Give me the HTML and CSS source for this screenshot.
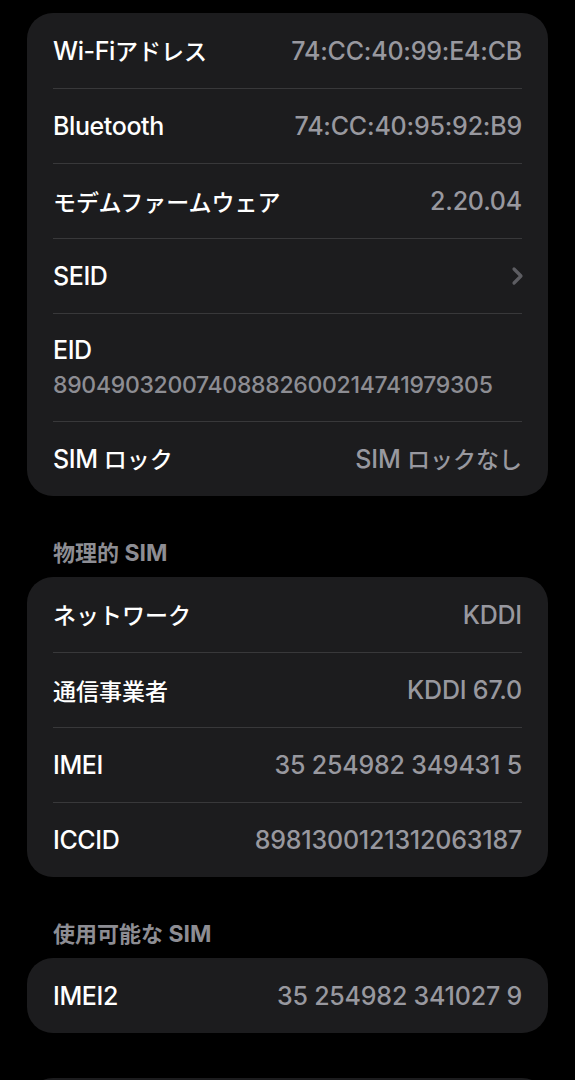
FILE: index.html
```html
<!DOCTYPE html>
<html lang="ja">
<head>
  <meta charset="UTF-8">
  <title>情報</title>
  <link rel="stylesheet" href="styles.css">
</head>
<body>
  <div class="page">
    <div class="card">
      <div class="row">
        <span class="label">Wi-Fi<span class="jp">アドレス</span></span>
        <span class="value">74:CC:40:99:E4:CB</span>
      </div>
      <div class="row">
        <span class="label">Bluetooth</span>
        <span class="value">74:CC:40:95:92:B9</span>
      </div>
      <div class="row">
        <span class="label jp">モデムファームウェア</span>
        <span class="value">2.20.04</span>
      </div>
      <div class="row">
        <span class="label">SEID</span>
        <svg class="chevron" width="13" height="20" viewBox="0 0 13 20">
          <path d="M3 3 L10 10 L3 17" fill="none" stroke="#5d5d62" stroke-width="3.2" stroke-linecap="round" stroke-linejoin="round"/>
        </svg>
      </div>
      <div class="row row-stack">
        <span class="label">EID</span>
        <span class="value sub">89049032007408882600214741979305</span>
      </div>
      <div class="row">
        <span class="label">SIM <span class="jp">ロック</span></span>
        <span class="value">SIM <span class="jp">ロックなし</span></span>
      </div>
    </div>

    <h3 class="group-title"><span class="jp">物理的</span> SIM</h3>
    <div class="card">
      <div class="row">
        <span class="label jp">ネットワーク</span>
        <span class="value">KDDI</span>
      </div>
      <div class="row">
        <span class="label jp">通信事業者</span>
        <span class="value">KDDI 67.0</span>
      </div>
      <div class="row">
        <span class="label">IMEI</span>
        <span class="value">35 254982 349431 5</span>
      </div>
      <div class="row">
        <span class="label">ICCID</span>
        <span class="value">8981300121312063187</span>
      </div>
    </div>

    <h3 class="group-title"><span class="jp">使用可能な</span> SIM</h3>
    <div class="card">
      <div class="row">
        <span class="label">IMEI2</span>
        <span class="value">35 254982 341027 9</span>
      </div>
    </div>

    <div class="card card-next">
      <div class="row"></div>
    </div>
  </div>
</body>
</html>
```

FILE: styles.css
```css
body {
  margin: 0;
  background: #000;
  font-family: 'Inter', 'Noto Sans CJK JP', sans-serif;
  color: #fff;
}
.page {
  padding: 13px 27px 0;
}
.card {
  background: #1c1c1e;
  border-radius: 26px;
}
.card-next {
  margin-top: 45px;
}
.row {
  display: flex;
  align-items: center;
  justify-content: space-between;
  height: 75px;
  margin: 0 26px;
  border-top: 1px solid #38383a;
  box-sizing: border-box;
}
.row:first-child {
  border-top: none;
}
.row-stack {
  height: 108px;
  flex-direction: column;
  align-items: flex-start;
  justify-content: center;
  gap: 5px;
}
.label {
  font-size: 25px;
  font-weight: 500;
  letter-spacing: -0.4px;
  line-height: 30px;
}
.value {
  font-size: 25px;
  font-weight: 500;
  letter-spacing: -0.2px;
  line-height: 30px;
  color: #98989f;
}
.value.sub {
  font-size: 23px;
  letter-spacing: -0.3px;
  color: #8d8d93;
}
.jp {
  font-family: 'Noto Sans CJK JP', sans-serif;
  font-size: 23px;
  letter-spacing: 0;
  line-height: 1;
}
.chevron {
  margin-right: -2px;
}
.group-title {
  margin: 43px 26px 10px;
  height: 28px;
  font-size: 23px;
  line-height: 28px;
  font-weight: 700;
  color: #8d8d93;
}
.group-title .jp {
  font-size: 22px;
}
```
